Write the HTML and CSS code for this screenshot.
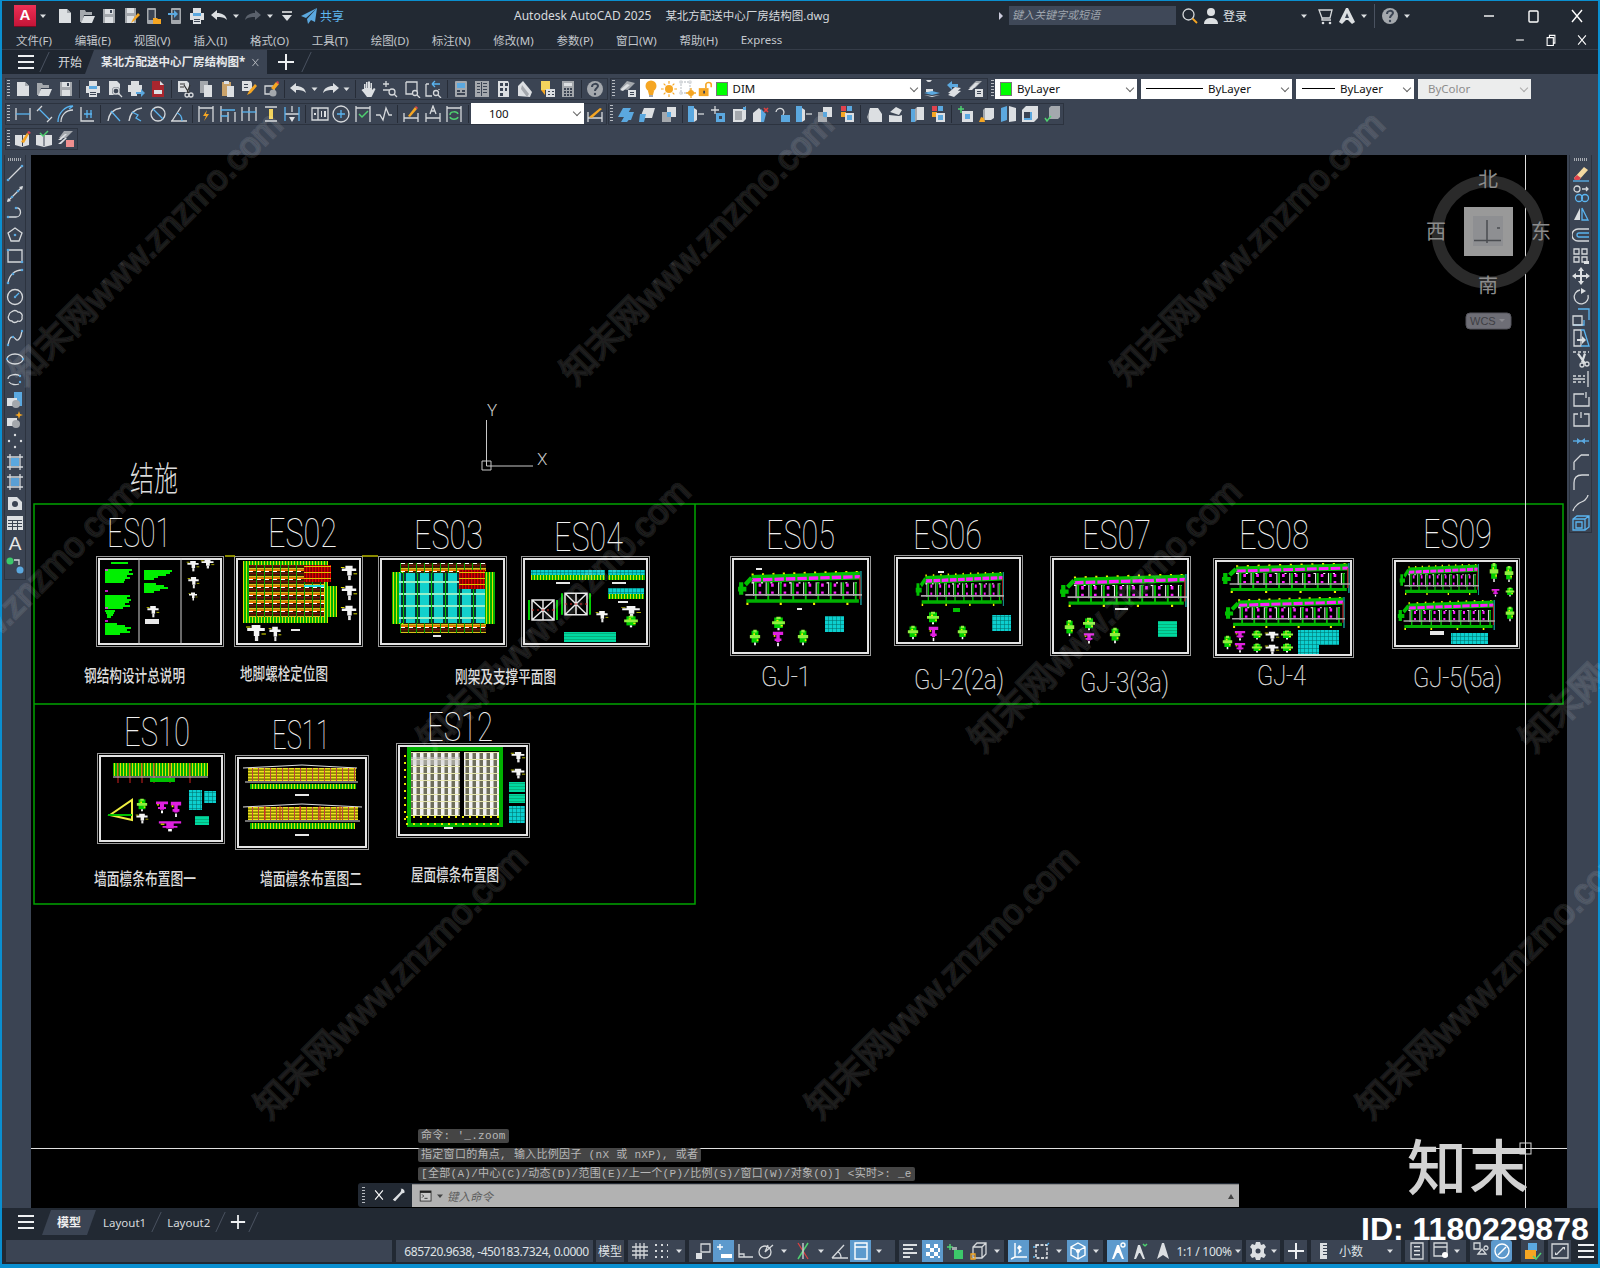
FILE: index.html
```html
<!DOCTYPE html>
<html lang="zh">
<head>
<meta charset="utf-8">
<title>Autodesk AutoCAD 2025</title>
<link rel="stylesheet" href="styles.css">
</head>
<body>
<svg class="defs" aria-hidden="true">
<defs>
<symbol id="doc" viewBox="0 0 18 18"><path class="F" d="M3 2h8l4 4v10H3z"/><path class="G" d="M11 2l4 4h-4z"/></symbol>
<symbol id="folder" viewBox="0 0 18 18"><path class="G" d="M2 3h5l1 2h6v3H6l-2 7H2z"/><path class="F" d="M6 9h11l-3 7H3z"/></symbol>
<symbol id="save" viewBox="0 0 18 18"><path class="G" d="M3 2h12v14H3z"/><path class="F" d="M5 2h8v5H5zM5 10h8v6H5z"/><path class="D" d="M10 3h2v3h-2z"/></symbol>
<symbol id="saveas" viewBox="0 0 18 18"><path class="G" d="M3 1h11v15H3z"/><path class="F" d="M5 1h7v5H5zM5 9h7v7H5z"/><path class="O" d="M9 16l2-4 5-6 2 2-6 6z"/></symbol>
<symbol id="phone" viewBox="0 0 18 18"><rect class="G" x="3" y="1" width="9" height="16" rx="1"/><rect class="D" x="4.500" y="3" width="6" height="10"/><path class="O" d="M9 11h4l1 1h3v5H9z"/></symbol>
<symbol id="phone2" viewBox="0 0 18 18"><rect class="G" x="5" y="1" width="10" height="16" rx="1"/><rect class="D" x="6.500" y="3" width="7" height="10"/><path class="B" d="M2 6h6V3l4 4-4 4V8H2z"/></symbol>
<symbol id="print" viewBox="0 0 18 18"><path class="F" d="M5 1h8v5H5z"/><path class="F" d="M2 6h14v7H2z"/><path class="F" d="M5 11h8v6H5z"/><path class="B" d="M5 6h8v3H5z"/><path class="D" d="M6 12h6v1H6zM6 14h6v1H6z"/></symbol>
<symbol id="preview" viewBox="0 0 18 18"><path class="F" d="M3 1h8l3 3v11H3z"/><circle class="D" cx="10" cy="11" r="4"/><circle class="l" cx="10" cy="11" r="3"/><path class="l" d="M12 13l4 4"/></symbol>
<symbol id="plotto" viewBox="0 0 18 18"><path class="F" d="M4 1h8v4H4zM1 5h14v7H1zM4 10h6v6H4z"/><path class="B" d="M9 12h5V9l4 4-4 4v-3H9z"/></symbol>
<symbol id="dwf" viewBox="0 0 18 18"><path class="Rd" d="M3 1h8l4 4v12H3z"/><path class="F" d="M11 1l4 4h-4zM5 10h8v4H5z"/></symbol>
<symbol id="cut" viewBox="0 0 18 18"><path class="F" d="M2 1h9l2 2v9H2z"/><circle class="l" cx="11" cy="15" r="2"/><circle class="l" cx="15" cy="15" r="2"/><path class="lk" d="M8 5l5 8M14 5l-3 8M4 4h5M4 7h4"/></symbol>
<symbol id="copy" viewBox="0 0 18 18"><path class="G" d="M3 1h8v12H3z"/><path class="F" d="M7 5h8v12H7z"/></symbol>
<symbol id="paste" viewBox="0 0 18 18"><path class="Br" d="M3 2h9v14H3z"/><path class="F" d="M5 1h5v3H5z"/><path class="F" d="M8 6h7v11H8z"/></symbol>
<symbol id="match" viewBox="0 0 18 18"><path class="F" d="M2 1h9l1 2v8H2z"/><path class="D" d="M4 4h4v1H4zM4 7h4v1H4z"/><path class="O" d="M7 15l2-4 6-7 2 2-6 7z"/></symbol>
<symbol id="block" viewBox="0 0 18 18"><path class="l" d="M3 6h8l1 2v6H3z"/><circle class="G" cx="11" cy="13" r="3.500"/><path class="O" d="M9 8l5-6 3 2-5 6z"/><path class="R" d="M14 2l2-1 1 2-1 1z"/></symbol>
<symbol id="undo" viewBox="0 0 18 18"><path class="F" d="M1 8l6-5v3c5 0 9 2 10 7-3-3-6-3-10-3v3z"/></symbol>
<symbol id="redo" viewBox="0 0 18 18"><path class="F" d="M17 8l-6-5v3C6 6 2 8 1 13c3-3 6-3 10-3v3z"/></symbol>
<symbol id="undog" viewBox="0 0 18 18"><path class="G2" d="M17 8l-6-5v3C6 6 2 8 1 13c3-3 6-3 10-3v3z"/></symbol>
<symbol id="hand" viewBox="0 0 18 18"><path class="F" d="M4 9V4h1.500v4h.5V2h1.500v6h.5V1.500H10V8h.5V3H12v7l2-2 1.500 1-3 6-1 2H7l-3-4-2.500-3L3 9z"/></symbol>
<symbol id="zrt" viewBox="0 0 18 18"><path class="l" d="M5 1v6M2 4h6M2 10h6"/><circle class="l" cx="11" cy="12" r="3"/><path class="l" d="M13 14l3 3"/></symbol>
<symbol id="zwin" viewBox="0 0 18 18"><path class="l" d="M3 2h11v9M3 2v12h6"/><circle class="l" cx="12" cy="13" r="2.500"/><path class="l" d="M14 15l3 3"/></symbol>
<symbol id="zprev" viewBox="0 0 18 18"><path class="b" d="M8 4h8M8 4l3-3M8 4l3 3"/><path class="l" d="M2 4v12h6M2 4h3M15 9v1"/><circle class="l" cx="12" cy="13" r="2.500"/><path class="l" d="M14 15l3 3"/></symbol>
<symbol id="props" viewBox="0 0 18 18"><rect class="G" x="3" y="1" width="12" height="16" rx="1"/><path class="B" d="M5 3h8v5H5z"/><path class="D" d="M5 10h3v2H5zM10 10h3v2h-3zM5 13h8v2H5z"/></symbol>
<symbol id="dc" viewBox="0 0 18 18"><rect class="G" x="2" y="1" width="14" height="16"/><path class="D" d="M8 2h1v14H8zM4 3h3v1H4zM4 6h3v1H4zM4 9h3v1H4zM4 12h3v1H4zM10 3h4v1h-4zM10 6h4v1h-4zM10 9h4v1h-4zM10 12h4v1h-4z"/></symbol>
<symbol id="tp" viewBox="0 0 18 18"><path class="F" d="M3 1h10l1 2v14H3z"/><path class="D" d="M5 3h3v3H5zM10 3h3v3h-3zM5 8h3v3H5zM10 8h2v3h-2zM5 13h3v3H5z"/></symbol>
<symbol id="sheet" viewBox="0 0 18 18"><path class="F" d="M2 16V6l5-5 9 11-2 5z"/><path class="G" d="M6 5l7 9-2 3-6-8z"/></symbol>
<symbol id="markup" viewBox="0 0 18 18"><path class="Y" d="M3 1h9v9H3z"/><path class="F" d="M8 9h9v8H8z"/><path class="D" d="M10 11h2v1h-2zM14 11h2v1h-2zM10 14h2v1h-2zM14 14h2v1h-2z"/><path class="O" d="M3 10h4v5z"/></symbol>
<symbol id="calc" viewBox="0 0 18 18"><rect class="G" x="3" y="1" width="12" height="16"/><path class="F" d="M5 3h8v3H5z"/><path class="D" d="M5 8h2v2H5zM8 8h2v2H8zM11 8h2v2h-2zM5 11h2v2H5zM8 11h2v2H8zM11 11h2v2h-2zM5 14h2v2H5zM8 14h2v2H8zM11 14h2v2h-2z"/></symbol>
<symbol id="help" viewBox="0 0 18 18"><circle class="G" cx="9" cy="9" r="8"/><path class="ln" d="M6 7c0-4 6-4 6-1 0 2-3 2-3 5"/><circle class="D" cx="9" cy="14" r="1.200"/></symbol>
<symbol id="lstack" viewBox="0 0 18 18"><path class="G" d="M8 1l8 2-7 7-8-1z"/><path class="F" d="M1 10l7-6 3 1-7 6z"/><path class="F" d="M9 10h8v7H9z"/><path class="D" d="M11 12h4v1h-4zM11 14h4v1h-4z"/></symbol>
<symbol id="bulb" viewBox="0 0 18 18"><circle class="O" cx="9" cy="6" r="5.500"/><path class="O" d="M6 11h6l-1 4H7z"/><path class="G" d="M7 15h4v2H7z"/></symbol>
<symbol id="sun" viewBox="0 0 18 18"><circle class="O" cx="9" cy="9" r="4.500"/><path class="lo" d="M9 0v3M9 15v3M0 9h3M15 9h3M3 3l2 2M13 13l2 2M3 15l2-2M13 5l2-2"/></symbol>
<symbol id="frz" viewBox="0 0 18 18"><path class="ld" d="M3 2h9v11H3z"/><circle class="l" cx="3" cy="2" r="1.200"/><circle class="l" cx="12" cy="2" r="1.200"/><circle class="l" cx="3" cy="13" r="1.200"/><circle class="O" cx="13" cy="13" r="3"/><path class="lo" d="M13 8v10M8 13h10"/></symbol>
<symbol id="lock" viewBox="0 0 18 18"><path class="O" d="M2 8h11v9H2z"/><path class="lo2" d="M10 8V4c0-3 6-3 6 0v3"/><path class="D" d="M7 11h2v3H7z"/></symbol>
<symbol id="lcur" viewBox="0 0 18 18"><path class="F" d="M6 2a3 3 0 1 1 .01 0zM3 9h7v3H3z"/><path class="B" d="M1 13l8-2 8 2-8 2z"/><path class="F" d="M1 15l8 2 8-2-8 1z"/></symbol>
<symbol id="lprev" viewBox="0 0 18 18"><path class="B" d="M2 5l5-4v3h6v3H7v3z"/><path class="F" d="M3 13l7-6 6 1-7 6zM3 15l7-5 6 1-7 6z"/></symbol>
<symbol id="lstate" viewBox="0 0 18 18"><path class="G" d="M3 8l7-7h6l-7 7z"/><path class="F" d="M2 10l7-7 4 0-7 7zM2 14l7-5"/><path class="F" d="M9 9h8v8H9z"/><path class="D" d="M11 11h4v1h-4zM11 13h4v1h-4z"/></symbol>
<symbol id="dlin" viewBox="0 0 18 18"><path class="l" d="M2 3v12M16 3v12"/><path class="b" d="M2 9h14"/></symbol>
<symbol id="dal" viewBox="0 0 18 18"><path class="l" d="M2 6l5-5M12 17l5-5"/><path class="b" d="M4 4l10 10"/></symbol>
<symbol id="darc" viewBox="0 0 18 18"><path class="l" d="M4 17c0-7 5-12 12-12"/><path class="b" d="M1 17C1 8 8 1 16 1M12 4l4-3"/></symbol>
<symbol id="dord" viewBox="0 0 18 18"><path class="l" d="M3 2v14h13"/><path class="b" d="M9 5v8M13 5v8M6 9h8"/></symbol>
<symbol id="drad" viewBox="0 0 18 18"><path class="l" d="M2 16C3 8 8 4 15 3"/><path class="b" d="M5 6l9 10"/></symbol>
<symbol id="djog" viewBox="0 0 18 18"><path class="l" d="M2 16C3 8 8 4 15 3"/><path class="b" d="M5 7l6 3-2 3 5 3"/></symbol>
<symbol id="ddia" viewBox="0 0 18 18"><circle class="l" cx="9" cy="9" r="7"/><path class="b" d="M4 4l10 10"/></symbol>
<symbol id="dang" viewBox="0 0 18 18"><path class="l" d="M1 16h16M2 16L11 2"/><path class="b" d="M7 8c3 1 5 4 5 8"/></symbol>
<symbol id="dq" viewBox="0 0 18 18"><path class="l" d="M2 1v16M16 1v16M2 3h14"/><path class="O" d="M10 5l-4 6h3l-2 5 5-7H9z"/></symbol>
<symbol id="dbase" viewBox="0 0 18 18"><path class="l" d="M2 1v16M9 7v10M16 7v10"/><path class="b" d="M2 5h14M2 11h7"/></symbol>
<symbol id="dcont" viewBox="0 0 18 18"><path class="l" d="M2 2v14M9 2v14M16 2v14"/><path class="b" d="M2 7h14"/></symbol>
<symbol id="dsp" viewBox="0 0 18 18"><path class="l" d="M3 2h12M3 16h12"/><path class="Y" d="M7 4h4v10H7z"/></symbol>
<symbol id="dbrk" viewBox="0 0 18 18"><path class="l" d="M2 9h14M9 1v6"/><path class="F" d="M6 12h6l-3 5z"/><path class="b" d="M2 2v14M16 2v14"/></symbol>
<symbol id="tol" viewBox="0 0 18 18"><path class="l" d="M1 3h16v12H1zM7 3v12"/><path class="F" d="M3 8h2v2H3zM10 6h1v6h-1zM13 6h2v6h-2z"/></symbol>
<symbol id="cen" viewBox="0 0 18 18"><circle class="l" cx="9" cy="9" r="8"/><path class="b" d="M9 5v8M5 9h8"/></symbol>
<symbol id="insp" viewBox="0 0 18 18"><path class="l" d="M2 1v16M16 1v16M2 3h14"/><path class="gc" d="M5 9l3 3 6-6"/></symbol>
<symbol id="jog" viewBox="0 0 18 18"><path class="l" d="M1 10h4l3 5 3-12 3 7h3"/></symbol>
<symbol id="dedit" viewBox="0 0 18 18"><path class="l" d="M2 8v9M16 8v9M2 13h14"/><path class="O" d="M6 11l7-9 2 2-7 8z"/><path class="R" d="M13 2l1-1 2 2-1 1z"/></symbol>
<symbol id="dtxt" viewBox="0 0 18 18"><path class="l" d="M2 8v9M16 8v9M2 13h14M6 9l3-8 3 8M7 6h4"/></symbol>
<symbol id="dup" viewBox="0 0 18 18"><path class="l" d="M2 1v16M16 1v16M2 3h14"/><path class="gc" d="M5 10c0-4 7-4 8-1M13 12c-1 3-7 3-8 0"/></symbol>
<symbol id="dst" viewBox="0 0 18 18"><path class="l" d="M2 7v10M16 7v10M2 13h14"/><path class="O" d="M3 12l11-9 2 1-10 9z"/></symbol>
<symbol id="box1" viewBox="0 0 18 18"><path class="B" d="M1 12l5-9h8l-5 9zM6 15l4-8h7l-3 8z"/><path class="B" d="M4 17l3-5h7l-4 5z"/></symbol>
<symbol id="box2" viewBox="0 0 18 18"><path class="F" d="M6 3h11l-3 10H2z"/><path class="B" d="M2 9h6l-2 8H1z"/></symbol>
<symbol id="box3" viewBox="0 0 18 18"><path class="F" d="M7 2h9v10H7z"/><path class="G" d="M2 7h9v10H2z"/><path class="B" d="M7 7h4v5H7z"/></symbol>
<symbol id="ext" viewBox="0 0 18 18"><path class="B" d="M1 1h6v16H1z"/><path class="F" d="M7 3l3 2v10l-3 2z"/><path class="l" d="M11 9h6"/></symbol>
<symbol id="mv3" viewBox="0 0 18 18"><path class="l" d="M6 1v8M2 5h8"/><path class="B" d="M7 8h9v9H7z"/><path class="D" d="M10 11h3v3h-3z"/></symbol>
<symbol id="boxs" viewBox="0 0 18 18"><path class="F" d="M3 4h10l3-3v13l-3 3H3z"/><path class="G" d="M5 6h7v9H5z"/><path class="B" d="M13 2h3v3h-3z"/></symbol>
<symbol id="rbox" viewBox="0 0 18 18"><path class="F" d="M1 17V8l6-5 3 3-1 11z"/><path class="B" d="M9 4l5 5-2 8H9z"/><path class="lr2" d="M12 3l4 4M16 3l-4 4"/></symbol>
<symbol id="rot3" viewBox="0 0 18 18"><path class="l" d="M3 7a4 4 0 1 1 7 3"/><path class="B" d="M8 10h9v7H8z"/></symbol>
<symbol id="wedge" viewBox="0 0 18 18"><path class="F" d="M5 3h8l4 6v8H4V6z"/><path class="G" d="M4 7l-2 5 2 5z"/></symbol>
<symbol id="drum" viewBox="0 0 18 18"><path class="F" d="M4 7l6-5 6 3-3 5zM3 10l10 1 3-1v7H3z"/></symbol>
<symbol id="sl3" viewBox="0 0 18 18"><path class="B" d="M3 4h4v13H3z"/><path class="F" d="M9 2h7v13H9z"/><path class="G" d="M7 4l2-2v13l-2 2z"/></symbol>
<symbol id="color3" viewBox="0 0 18 18"><path class="R" d="M3 1h5v5H3z"/><path class="B" d="M9 1h5v5H9z"/><path class="O" d="M3 7h5v5H3z"/><path class="F" d="M7 8h9v9H7z"/><path class="B" d="M9 10h5v5H9z"/></symbol>
<symbol id="addbox" viewBox="0 0 18 18"><path class="gc" d="M4 1v7M1 4h6"/><path class="F" d="M5 6h11v11H5z"/><path class="B" d="M8 9h5v5H8z"/></symbol>
<symbol id="sweep" viewBox="0 0 18 18"><path class="F" d="M7 3h9v10l-3 2H7z"/><path class="G" d="M5 5l2-2v12l-2 1z"/><path class="O" d="M3 12l3 1 1 4H1z"/></symbol>
<symbol id="split3" viewBox="0 0 18 18"><path class="B" d="M1 3l6-2v14l-6 2z"/><path class="F" d="M9 1l7 2v13l-7 1z"/></symbol>
<symbol id="cube" viewBox="0 0 18 18"><path class="F" d="M1 5l4-4h12v12l-4 4H1z"/><path class="B" d="M3 7h8v8H3z"/><path class="D" d="M3 7h6v6H3z"/></symbol>
<symbol id="chk3" viewBox="0 0 18 18"><path class="G" d="M6 3l2-2h9v11l-2 2H6z"/><path class="gc" d="M2 13l2 3 4-5"/></symbol>
<symbol id="erase" viewBox="0 0 18 18"><path class="Fr" d="M2 14l10-11 4 3-9 10H3z"/><path class="R" d="M2 14l3-3 4 3-2 2H3z"/><path class="b" d="M1 17h16"/></symbol>
<symbol id="copyc" viewBox="0 0 18 18"><circle class="l" cx="5" cy="4" r="3"/><circle class="b" cx="7" cy="13" r="3.500"/><circle class="b" cx="13" cy="13" r="3.500"/><path class="l" d="M10 4h6M14 2l2 2-2 2"/></symbol>
<symbol id="mirror" viewBox="0 0 18 18"><path class="F" d="M8 3v12H2z"/><path class="b" d="M10 3l6 12h-6z"/></symbol>
<symbol id="offs" viewBox="0 0 18 18"><path class="l" d="M17 3H6a6 6 0 0 0 0 12h11"/><path class="b" d="M17 7H7a2 2 0 0 0 0 4h10"/></symbol>
<symbol id="arr" viewBox="0 0 18 18"><path class="l" d="M2 2h5v5H2zM10 2h5v5h-5zM2 10h5v5H2zM10 10h5v5h-5z"/><path class="F" d="M12 14h5v3h-5z"/></symbol>
<symbol id="mv" viewBox="0 0 18 18"><path class="F" d="M9 0l3 4h-2v4h4V6l4 3-4 3v-2h-4v4h2l-3 4-3-4h2v-4H4v2L0 9l4-3v2h4V4H6z"/></symbol>
<symbol id="rot" viewBox="0 0 18 18"><path class="l" d="M8 2a7 7 0 1 0 8 5"/><path class="F" d="M9 0l5 3-5 3z"/></symbol>
<symbol id="scale" viewBox="0 0 18 18"><path class="b" d="M6 1h11v11M1 17h11v-5"/><path class="l" d="M1 8h9v9H1z"/></symbol>
<symbol id="stretch" viewBox="0 0 18 18"><path class="l" d="M2 1h7v16H2z"/><path class="b" d="M9 1h3l5 16H9"/><path class="F" d="M5 10h5V7l4 4-4 4v-3H5z"/></symbol>
<symbol id="trim" viewBox="0 0 18 18"><path class="ldash" d="M1 2h16"/><circle class="l" cx="10" cy="15" r="2"/><circle class="l" cx="15" cy="14" r="2"/><path class="F" d="M5 4l2-1 7 10-2 1zM12 3l2 1-3 9-2-1z"/></symbol>
<symbol id="ext2" viewBox="0 0 18 18"><path class="l" d="M16 1v16M1 9h12"/><path class="ldash" d="M1 6h12M1 12h12"/></symbol>
<symbol id="brk" viewBox="0 0 18 18"><path class="l" d="M12 3H2v12h15V6M14 1v6"/></symbol>
<symbol id="brk2" viewBox="0 0 18 18"><path class="l" d="M6 3H2v12h15V3h-5M9 1v6"/></symbol>
<symbol id="join" viewBox="0 0 18 18"><path class="b" d="M1 9h16"/><path class="B" d="M5 6l4 3-4 3zM13 6L9 9l4 3z"/></symbol>
<symbol id="cham" viewBox="0 0 18 18"><path class="l" d="M9 2h8M2 9v8M2 9l7-7"/></symbol>
<symbol id="fil" viewBox="0 0 18 18"><path class="l" d="M10 2h7M2 10v7M2 10c0-5 3-8 8-8"/></symbol>
<symbol id="blend" viewBox="0 0 18 18"><path class="l" d="M1 17c1-4 3-5 5-7s5-2 7-4 3-3 3-5"/></symbol>
<symbol id="solid" viewBox="0 0 18 18"><path class="b" d="M1 5l4-3h12v11l-4 3H1zM1 5h12v11M13 5l4-3M4 8h6v6H4z"/></symbol>
<symbol id="line" viewBox="0 0 18 18"><path class="l" d="M2 16L16 2"/><circle class="B" cx="2" cy="16" r="1.300"/><circle class="B" cx="16" cy="2" r="1.300"/></symbol>
<symbol id="xline" viewBox="0 0 18 18"><path class="F" d="M1 17l4-1-3-3zM17 1l-4 1 3 3z"/><path class="l" d="M2 16L16 2"/><circle class="B" cx="6" cy="12" r="1.300"/><circle class="B" cx="12" cy="6" r="1.300"/></symbol>
<symbol id="pline" viewBox="0 0 18 18"><path class="l" d="M2 12h8M10 3c6-1 6 9 0 9"/><circle class="B" cx="2" cy="12" r="1.300"/><circle class="B" cx="10" cy="3" r="1.300"/></symbol>
<symbol id="poly" viewBox="0 0 18 18"><path class="l" d="M9 2l7 5-3 8H5L2 7z"/><circle class="B" cx="9" cy="9" r="1.300"/></symbol>
<symbol id="rect" viewBox="0 0 18 18"><path class="l" d="M2 3h14v12H2z"/><circle class="B" cx="2" cy="3" r="1.300"/><circle class="B" cx="16" cy="15" r="1.300"/></symbol>
<symbol id="arc" viewBox="0 0 18 18"><path class="l" d="M2 16C3 8 9 3 16 3"/><circle class="B" cx="2" cy="16" r="1.300"/><circle class="B" cx="7" cy="7" r="1.300"/><circle class="B" cx="16" cy="3" r="1.300"/></symbol>
<symbol id="circle" viewBox="0 0 18 18"><circle class="l" cx="9" cy="9" r="7.500"/><path class="b" d="M9 9l4-4"/><circle class="B" cx="9" cy="9" r="1.200"/></symbol>
<symbol id="cloud" viewBox="0 0 18 18"><path class="l" d="M3 7c0-3 3-3 4-4 2-1 4 0 5 1 3 0 5 3 4 5 1 3-2 5-4 4-2 2-5 2-6 0-3 0-5-3-3-6z"/></symbol>
<symbol id="spl" viewBox="0 0 18 18"><path class="l" d="M2 16c1-4 2-9 5-8s3 5 6 2 2-6 3-8"/><circle class="B" cx="2" cy="16" r="1.200"/><circle class="B" cx="7" cy="8" r="1.200"/><circle class="B" cx="16" cy="2" r="1.200"/></symbol>
<symbol id="ell" viewBox="0 0 18 18"><ellipse class="l" cx="9" cy="9" rx="8" ry="5"/><circle class="B" cx="1" cy="9" r="1.200"/><circle class="B" cx="17" cy="9" r="1.200"/></symbol>
<symbol id="ela" viewBox="0 0 18 18"><path class="l" d="M2 9c0-4 8-6 12-3M3 12c2 3 7 3 10 2"/><circle class="B" cx="14" cy="6" r="1.200"/><circle class="B" cx="14" cy="12" r="1.200"/></symbol>
<symbol id="insb" viewBox="0 0 18 18"><path class="B" d="M8 1h8v14H8z"/><path class="F" d="M1 7h10v8H1z"/><circle class="G" cx="10" cy="13" r="4"/></symbol>
<symbol id="mkb" viewBox="0 0 18 18"><path class="F" d="M1 7h10v8H1z"/><circle class="G" cx="10" cy="13" r="4"/><path class="O" d="M13 0l1 3 3 1-3 1-1 3-1-3-3-1 3-1z"/></symbol>
<symbol id="pts" viewBox="0 0 18 18"><circle class="F" cx="9" cy="3" r="1.200"/><circle class="F" cx="3" cy="9" r="1.200"/><circle class="F" cx="15" cy="9" r="1.200"/><circle class="F" cx="9" cy="15" r="1.200"/></symbol>
<symbol id="hat" viewBox="0 0 18 18"><path class="l" d="M1 4h16M1 14h16M4 1v16M14 1v16"/><path class="B" d="M5 5h8v8H5z"/></symbol>
<symbol id="grad" viewBox="0 0 18 18"><path class="l" d="M1 4h16M1 14h16M4 1v16M14 1v16"/><path class="Gd" d="M5 5h8v8H5z"/></symbol>
<symbol id="reg" viewBox="0 0 18 18"><path class="F" d="M2 3h9l5 5v8H2z"/><circle class="D" cx="9" cy="10" r="3"/></symbol>
<symbol id="tbl" viewBox="0 0 18 18"><path class="F" d="M1 2h16v14H1z"/><path class="D" d="M2 6h14v1H2zM2 9h14v1H2zM2 12h14v1H2zM6 6h1v10H6zM11 6h1v10h-1z"/></symbol>
<symbol id="gradc" viewBox="0 0 18 18"><circle class="N" cx="4" cy="5" r="3.500"/><circle class="B" cx="14" cy="14" r="3.500"/><path class="l" d="M8 4h5v5"/></symbol>
<symbol id="e1" viewBox="0 0 18 18"><path class="F" d="M1 5h14v10l-7 2-7-2z"/><path class="D" d="M8 5h1v11H8z"/><path class="O" d="M7 12l6-9 2 1-5 9z"/><path class="R" d="M13 2l2-1 2 2-2 1z"/></symbol>
<symbol id="e2" viewBox="0 0 18 18"><path class="F" d="M1 5h16v10l-8 2-8-2z"/><path class="D" d="M8.500 5h1v11h-1z"/><path class="gc" d="M5 3l3 3 5-5"/></symbol>
<symbol id="e3" viewBox="0 0 18 18"><path class="G" d="M7 1h9L9 8H2z"/><path class="F" d="M1 10l7-6 2 0-6 6zM1 14l7-6 2 0-6 6z"/><path class="Rp" d="M9 10h8v7H9z"/></symbol>
<symbol id="grid" viewBox="0 0 18 18"><path class="l" d="M1 5h16M1 9h16M1 13h16M5 1v16M9 1v16M13 1v16"/></symbol>
<symbol id="snap" viewBox="0 0 18 18"><path class="ldot" d="M3 3h13M3 9h13M3 15h13"/></symbol>
<symbol id="infer" viewBox="0 0 18 18"><path class="l" d="M7 2h9v8H7z"/><path class="F" d="M2 11h6v6H2z"/></symbol>
<symbol id="dynin" viewBox="0 0 18 18"><path class="lw" d="M5 2v6M2 5h6"/><path class="Fw" d="M6 12h11v4H6z"/></symbol>
<symbol id="ortho" viewBox="0 0 18 18"><path class="l" d="M3 2v13h14M3 12h5v3"/></symbol>
<symbol id="polar" viewBox="0 0 18 18"><circle class="l" cx="8" cy="10" r="6"/><path class="l" d="M8 10l8-7M8 10l3-7"/></symbol>
<symbol id="xsnap" viewBox="0 0 18 18"><path class="lr" d="M4 1l10 16"/><path class="gc" d="M14 1L4 17"/><path class="l" d="M9 1v16"/></symbol>
<symbol id="angle" viewBox="0 0 18 18"><path class="l" d="M1 16h16M1 16L13 3"/><path class="l" d="M7 10c2 1 3 4 3 6"/></symbol>
<symbol id="osnap" viewBox="0 0 18 18"><path class="lw" d="M3 1h12v16H3zM3 5h12"/></symbol>
<symbol id="lwt" viewBox="0 0 18 18"><path class="F" d="M2 2h14v2H2zM2 6h10v2H2zM2 10h14v2H2zM2 14h7v2H2z"/></symbol>
<symbol id="transp" viewBox="0 0 18 18"><path class="Fw" d="M2 2h4v4H2zM10 2h4v4h-4zM6 6h4v4H6zM14 6h2v4h-2zM2 10h4v4H2zM10 10h4v4h-4zM6 14h4v2H6zM14 14h2v2h-2z"/></symbol>
<symbol id="selc" viewBox="0 0 18 18"><path class="gc" d="M3 2v6M0 5h6"/><path class="G" d="M5 5h5v3H5z"/><path class="N" d="M7 8h9v9H7z"/></symbol>
<symbol id="d3" viewBox="0 0 18 18"><path class="l" d="M7 1h9v11l-4 4H3V5zM3 5h9v11M12 5l4-4"/><path class="lo" d="M1 12h4v5H1z"/></symbol>
<symbol id="axes" viewBox="0 0 18 18"><path class="lw" d="M5 1v14h12M5 15l-4 2"/><path class="Fw" d="M9 3l3 2-2 2 2 2-4 3 1-4-2-2z"/></symbol>
<symbol id="gz" viewBox="0 0 18 18"><path class="ldb" d="M4 3h11v13H4z"/><path class="b" d="M1 5h2M15 3l2-2M1 15h2"/></symbol>
<symbol id="ucs3" viewBox="0 0 18 18"><path class="lw" d="M9 1l7 4v8l-7 4-7-4V5zM2 5l7 4 7-4M9 9v8"/><circle class="Fw" cx="9" cy="9" r="2"/></symbol>
<symbol id="anno" viewBox="0 0 18 18"><path class="Fw" d="M8 3l2 0 5 14-2 0-3-6-2 0-3 6H3z"/><circle class="lw" cx="14" cy="3" r="2"/></symbol>
<symbol id="anno2" viewBox="0 0 18 18"><path class="F" d="M7 3h2l5 14h-2l-3-6H8l-3 6H3z"/><path class="gc" d="M12 2l2 2M16 2l-2 2"/></symbol>
<symbol id="anno3" viewBox="0 0 18 18"><path class="F" d="M8 1h2l5 16-6-4-6 4z"/></symbol>
<symbol id="gear" viewBox="0 0 18 18"><path class="F" d="M7 0h4l1 3 3-1 2 3-2 2v4l2 2-2 3-3-1-1 3H7l-1-3-3 1-2-3 2-2V7L1 5l2-3 3 1z"/><circle class="D" cx="9" cy="9" r="2.500"/></symbol>
<symbol id="plus" viewBox="0 0 18 18"><path class="lb" d="M9 1v16M1 9h16"/></symbol>
<symbol id="ruler" viewBox="0 0 18 18"><path class="F" d="M5 1h7v16H5z"/><path class="D" d="M8 3h4v1H8zM8 6h4v1H8zM8 9h4v1H8zM8 12h4v1H8z"/></symbol>
<symbol id="clip" viewBox="0 0 18 18"><path class="l" d="M3 1h12v16H3z"/><path class="F" d="M6 4h6v1.500H6zM6 8h6v1.500H6zM6 12h6v1.500H6z"/></symbol>
<symbol id="ws" viewBox="0 0 18 18"><path class="l" d="M2 1h13v13H2zM2 5h13"/><circle class="Fw" cx="13" cy="13" r="3"/></symbol>
<symbol id="iso" viewBox="0 0 18 18"><path class="l" d="M1 1h6v6H1zM5 12l4-5 4 5zM13 4a2 2 0 1 0 .01 0z"/></symbol>
<symbol id="gauge" viewBox="0 0 18 18"><circle class="lw" cx="9" cy="9" r="7"/><path class="lw" d="M5 13l8-8"/></symbol>
<symbol id="hw" viewBox="0 0 18 18"><path class="B" d="M4 1h9v8H4z"/><path class="O" d="M1 8h11v9H1z"/><path class="gc" d="M9 14l3 3 5-6"/></symbol>
<symbol id="full" viewBox="0 0 18 18"><path class="l" d="M1 2h16v14H1z"/><path class="F" d="M11 5h3v3zM7 13H4v-3z"/><path class="l" d="M6 12l6-6"/></symbol>
<symbol id="menu" viewBox="0 0 18 18"><path class="lb" d="M1 3h16M1 9h16M1 15h16"/></symbol>
<symbol id="chev" viewBox="0 0 8 8"><path class="F" d="M1 2.500h6L4 6z"/></symbol>
<symbol id="search" viewBox="0 0 18 18"><circle class="l" cx="7.500" cy="7.500" r="5.500"/><path class="lo2" d="M11.500 11.500L16 16"/></symbol>
<symbol id="user" viewBox="0 0 18 18"><circle class="F" cx="9" cy="5" r="4"/><path class="F" d="M2 17c0-5 4-6 7-6s7 1 7 6z"/></symbol>
<symbol id="cart" viewBox="0 0 18 18"><path class="l" d="M2 3h13l-2 8H5zM5 11v2h9"/><circle class="F" cx="6" cy="16" r="1.300"/><circle class="F" cx="13" cy="16" r="1.300"/></symbol>
<symbol id="aut" viewBox="0 0 18 18"><path class="F" d="M8 1h2l7 14-3 2-4-4H8l-4 4-3-2z"/><path class="D" d="M9 6l2 5H7z"/></symbol>
<symbol id="plane" viewBox="0 0 18 18"><path class="B" d="M17 1L1 9l5 2zM17 1L7 12l1 5 3-4 4 2z"/></symbol>
<symbol id="qdrop" viewBox="0 0 18 18"><path class="lw" d="M4 5h10"/><path class="F" d="M4 8h10l-5 6z"/></symbol>
<symbol id="min" viewBox="0 0 18 18"><path class="lw" d="M4 9h10"/></symbol>
<symbol id="max" viewBox="0 0 18 18"><rect class="lw" x="5" y="4" width="9" height="11" rx="1"/></symbol>
<symbol id="close" viewBox="0 0 18 18"><path class="lw" d="M4 3l10 12M14 3L4 15"/></symbol>
<symbol id="restore" viewBox="0 0 18 18"><path class="lw" d="M4 6h8v10H4zM7 6V3h7v10h-2"/></symbol>
<symbol id="wrench" viewBox="0 0 18 18"><path class="F" d="M11 1c3-1 6 2 5 5l-3 1-2-2 1-3zM11 5l2 2-9 10-3-2z"/></symbol>
<symbol id="term" viewBox="0 0 18 18"><path class="Dk" d="M1 2h15v14H1z"/><path class="Lt" d="M2 5h13v10H2z"/><path class="lk" d="M4 7l2 2-2 2M7 12h4"/></symbol>
<pattern id="pStripe" width="8" height="8" patternUnits="userSpaceOnUse"><rect width="8" height="8" fill="#3a1d00"/><rect width="8" height="1.500" fill="#d8c21a"/><rect y="1.500" width="8" height="1.500" fill="#ff7b00"/><rect y="3" width="5" height="1" fill="#ffffff"/><rect y="5" width="8" height="1" fill="#7a0d0d"/><rect x="0" width="1" height="8" fill="#00a000"/></pattern>
<pattern id="pRed" width="3" height="6" patternUnits="userSpaceOnUse"><rect width="3" height="6" fill="#7d0000"/><rect width="1.300" height="6" fill="#e00000"/><rect y="2" width="3" height="1" fill="#e0c800"/></pattern>
<pattern id="pCyan" width="14" height="12" patternUnits="userSpaceOnUse"><rect width="14" height="12" fill="#04363a"/><rect width="9" height="12" fill="#12d0cc"/><rect y="5" width="14" height="2" fill="#98f0c8"/><rect x="11" width="1" height="12" fill="#00c000"/></pattern>
<pattern id="pGreen" width="3" height="5" patternUnits="userSpaceOnUse"><rect width="3" height="5" fill="#00b000"/><rect width="1" height="5" fill="#e0e000"/></pattern>
<pattern id="pTable" width="4" height="4" patternUnits="userSpaceOnUse"><rect width="4" height="4" fill="#0ccfcf"/><path d="M0 0h4M0 0v4" stroke="#006a64" stroke-width="1"/></pattern>
<pattern id="pTableG" width="3" height="3" patternUnits="userSpaceOnUse"><rect width="3" height="3" fill="#00d8a0"/><path d="M0 0h3" stroke="#0a8a5a" stroke-width="1"/></pattern>
<pattern id="pWhite" width="7" height="7" patternUnits="userSpaceOnUse"><rect width="7" height="7" fill="#6f6f5a"/><rect width="3.500" height="7" fill="#f2f2f2"/><rect y="3" width="7" height="1" fill="#e8e8b0"/></pattern>
<pattern id="pYellow" width="6" height="3" patternUnits="userSpaceOnUse"><rect width="6" height="3" fill="#8a8a00"/><rect width="6" height="1.300" fill="#f0e020"/><rect width="1" height="3" fill="#c04040"/></pattern>
<symbol id="truss" viewBox="0 0 120 30" preserveAspectRatio="none">
<path stroke="#00c000" stroke-width="7" fill="none" d="M14 7l104-3"/>
<path stroke="#ff20ff" stroke-width="3" stroke-dasharray="9 2" fill="none" d="M14 8l104-3"/>
<path stroke="#f0f000" stroke-width="1.500" stroke-dasharray="2 8" fill="none" d="M14 3l104-3"/>
<path stroke="#ffffff" stroke-dasharray="2 7" fill="none" d="M14 10.500h104"/>
<path stroke="#00c000" stroke-width="1.800" fill="none" d="M18 10v17M30 10v17M42 10v17M54 10v17M66 10v17M78 10v17M90 10v17M102 10v17M114 10v17"/>
<path stroke="#f0f0f0" fill="none" d="M16 10v12M28 10v12M40 10v12M52 10v12M64 10v12M76 10v12M88 10v12M100 10v12M112 10v12"/>
<path stroke="#ff20ff" stroke-width="2.500" stroke-dasharray="3 4" fill="none" d="M22 11v9M34 11v9M46 11v9M58 11v9M70 11v9M82 11v9M94 11v9M106 11v9"/>
<path stroke="#20d8d8" fill="none" d="M119 0v30"/>
<path stroke="#e02020" fill="none" d="M118 5v20"/>
<path stroke="#a8a8a8" stroke-width="1.500" fill="none" d="M8 21h112"/>
<path stroke="#00b000" stroke-width="3" fill="none" d="M9 26.500h108"/>
<path stroke="#00c000" stroke-width="4" fill="none" d="M4 10v11M1 16h8M8 12l6-6"/>
<path stroke="#f0f000" stroke-width="2" stroke-dasharray="2 30" fill="none" d="M9 29h112"/>
</symbol>
<symbol id="det" viewBox="0 0 14 20" preserveAspectRatio="none"><path fill="#00d000" d="M3 2h8v14H3z"/><path fill="#90f040" d="M5 1h4v3H5zM1 7h12v4H1z"/><path fill="#f0f000" d="M5 5h2v2H5zM9 12h2v2H9z"/><path fill="#ffffff" d="M6 16h2v3H6z"/></symbol>
<symbol id="detm" viewBox="0 0 14 20" preserveAspectRatio="none"><path fill="#e020e0" d="M1 2h12v4H1zM5 6h4v8H5zM3 10h8v3H3z"/><path fill="#f0f000" d="M2 6h2v2H2z"/><path fill="#ffffff" d="M6 15h2v4H6z"/></symbol>
<symbol id="wd" viewBox="0 0 20 20" preserveAspectRatio="none"><path fill="#f4f4f4" d="M6 3h8v3h4v3h-5v5H8V9H2V6h4z"/><path fill="#e8e8e8" d="M9 14h3v5H9z"/><path stroke="#f0f000" fill="none" d="M1 5h4M15 12h4"/></symbol>
<symbol id="xfr" viewBox="0 0 30 26" preserveAspectRatio="none"><path stroke="#e8e8e8" stroke-width="1.500" fill="none" d="M4 3h22v20H4zM4 3l22 20M26 3L4 23M15 3v20"/><path stroke="#00d000" stroke-width="2" fill="none" d="M1 3v20M29 3v20"/><path stroke="#e02020" stroke-dasharray="2 3" fill="none" d="M4 13h22"/></symbol>
</defs>
</svg>

<div class="page">
<div class="win">
  <header class="titlebar">
    <div class="logo">A</div>
    <svg class="cv ml2"><use href="#chev"/></svg>
    <div class="qa">
      <svg class="i"><use href="#doc"/></svg><svg class="i"><use href="#folder"/></svg><svg class="i"><use href="#save"/></svg><svg class="i"><use href="#saveas"/></svg><svg class="i"><use href="#phone"/></svg><svg class="i"><use href="#phone2"/></svg><svg class="i"><use href="#print"/></svg><svg class="i"><use href="#undo"/></svg><svg class="cv"><use href="#chev"/></svg><svg class="i dim"><use href="#undog"/></svg><svg class="cv"><use href="#chev"/></svg><svg class="i q"><use href="#qdrop"/></svg>
      <svg class="i"><use href="#plane"/></svg><span class="share">共享</span>
    </div>
    <div class="apptitle"><span>Autodesk AutoCAD 2025</span><span class="fname">某北方配送中心厂房结构图.dwg</span></div>
    <div class="tbright">
      <span class="tri"></span>
      <div class="searchbox">键入关键字或短语</div>
      <svg class="i"><use href="#search"/></svg><svg class="i"><use href="#user"/></svg><span class="login">登录</span>
      <svg class="cv ml-login"><use href="#chev"/></svg><svg class="i"><use href="#cart"/></svg><svg class="i"><use href="#aut"/></svg><svg class="cv"><use href="#chev"/></svg><span class="tsep"></span><svg class="i"><use href="#help"/></svg><svg class="cv"><use href="#chev"/></svg>
      <svg class="i wbtn first"><use href="#min"/></svg><svg class="i wbtn"><use href="#max"/></svg><svg class="i wbtn"><use href="#close"/></svg>
    </div>
  </header>

  <nav class="menubar">
    <span>文件(F)</span><span>编辑(E)</span><span>视图(V)</span><span>插入(I)</span><span>格式(O)</span><span>工具(T)</span><span>绘图(D)</span><span>标注(N)</span><span>修改(M)</span><span>参数(P)</span><span>窗口(W)</span><span>帮助(H)</span><span>Express</span>
    <div class="mwin"><svg class="i"><use href="#min"/></svg><svg class="i"><use href="#restore"/></svg><svg class="i"><use href="#close"/></svg></div>
  </nav>

  <div class="tabbar">
    <svg class="i menuic"><use href="#menu"/></svg>
    <span class="slash s1"></span>
    <span class="tab">开始</span>
    <span class="tab active">某北方配送中心厂房结构图* <svg class="tabx"><use href="#close"/></svg></span>
    <svg class="i plusic"><use href="#plus"/></svg>
    <span class="slash"></span>
  </div>

  <div class="tools">
    <div class="row r1">
      <div class="grp g1">
        <span class="grip"></span>
        <svg class="i"><use href="#doc"/></svg><svg class="i"><use href="#folder"/></svg><svg class="i"><use href="#save"/></svg><span class="sp"></span>
        <svg class="i"><use href="#print"/></svg><svg class="i"><use href="#preview"/></svg><svg class="i"><use href="#plotto"/></svg><svg class="i"><use href="#dwf"/></svg><span class="sp"></span>
        <svg class="i"><use href="#cut"/></svg><svg class="i"><use href="#copy"/></svg><svg class="i"><use href="#paste"/></svg><svg class="i"><use href="#match"/></svg><svg class="i"><use href="#block"/></svg><span class="sp"></span>
        <svg class="i"><use href="#undo"/></svg><svg class="cv cw"><use href="#chev"/></svg><svg class="i"><use href="#redo"/></svg><svg class="cv cw"><use href="#chev"/></svg><span class="sp"></span>
        <svg class="i"><use href="#hand"/></svg><svg class="i"><use href="#zrt"/></svg><svg class="i"><use href="#zwin"/></svg><svg class="i"><use href="#zprev"/></svg><span class="sp"></span>
        <svg class="i"><use href="#props"/></svg><svg class="i"><use href="#dc"/></svg><svg class="i"><use href="#tp"/></svg><svg class="i"><use href="#sheet"/></svg><svg class="i"><use href="#markup"/></svg><svg class="i"><use href="#calc"/></svg><span class="sp"></span>
        <svg class="i"><use href="#help"/></svg>
      </div>
      <div class="grp g2">
        <span class="grip"></span>
        <svg class="i"><use href="#lstack"/></svg>
        <div class="combo layer">
          <svg class="i"><use href="#bulb"/></svg><svg class="i sm"><use href="#sun"/></svg><svg class="i"><use href="#frz"/></svg><svg class="i sm"><use href="#lock"/></svg><span class="swatch"></span><span class="ctext">DIM</span><span class="vee"></span>
        </div>
        <svg class="i"><use href="#lcur"/></svg><svg class="i"><use href="#lprev"/></svg><svg class="i"><use href="#lstate"/></svg>
      </div>
      <span class="grip alone"></span>
      <div class="combo c-color"><span class="swatch"></span><span class="ctext">ByLayer</span><span class="vee"></span></div>
      <div class="combo c-lt"><span class="ln1"></span><span class="ctext">ByLayer</span><span class="vee"></span></div>
      <div class="combo c-lw"><span class="ln2"></span><span class="ctext">ByLayer</span><span class="vee"></span></div>
      <div class="combo c-by"><span class="ctext off">ByColor</span><span class="vee off"></span></div>
    </div>
    <div class="row r2">
      <div class="grp g3">
        <span class="grip"></span>
        <svg class="i"><use href="#dlin"/></svg><svg class="i"><use href="#dal"/></svg><svg class="i"><use href="#darc"/></svg><svg class="i"><use href="#dord"/></svg><span class="sp"></span>
        <svg class="i"><use href="#drad"/></svg><svg class="i"><use href="#djog"/></svg><svg class="i"><use href="#ddia"/></svg><svg class="i"><use href="#dang"/></svg><span class="sp"></span>
        <svg class="i"><use href="#dq"/></svg><svg class="i"><use href="#dbase"/></svg><svg class="i"><use href="#dcont"/></svg><svg class="i"><use href="#dsp"/></svg><svg class="i"><use href="#dbrk"/></svg><span class="sp"></span>
        <svg class="i"><use href="#tol"/></svg><svg class="i"><use href="#cen"/></svg><svg class="i"><use href="#insp"/></svg><svg class="i"><use href="#jog"/></svg><span class="sp"></span>
        <svg class="i"><use href="#dedit"/></svg><svg class="i"><use href="#dtxt"/></svg><svg class="i"><use href="#dup"/></svg><span class="sp"></span>
        <div class="combo c-100"><span class="ctext">100</span><span class="vee"></span></div>
        <svg class="i"><use href="#dst"/></svg>
      </div>
      <div class="grp g4">
        <span class="grip"></span>
        <svg class="i"><use href="#box1"/></svg><svg class="i"><use href="#box2"/></svg><svg class="i"><use href="#box3"/></svg><span class="sp"></span>
        <svg class="i"><use href="#ext"/></svg><svg class="i"><use href="#mv3"/></svg><svg class="i"><use href="#boxs"/></svg><svg class="i"><use href="#rbox"/></svg><svg class="i"><use href="#rot3"/></svg><svg class="i"><use href="#ext"/></svg><svg class="i"><use href="#box3"/></svg><svg class="i"><use href="#color3"/></svg><span class="sp"></span>
        <svg class="i"><use href="#wedge"/></svg><svg class="i"><use href="#drum"/></svg><svg class="i"><use href="#sl3"/></svg><svg class="i"><use href="#color3"/></svg><span class="sp"></span>
        <svg class="i"><use href="#addbox"/></svg><svg class="i"><use href="#sweep"/></svg><svg class="i"><use href="#split3"/></svg><svg class="i"><use href="#cube"/></svg><svg class="i"><use href="#chk3"/></svg>
      </div>
    </div>
    <div class="row r3">
      <div class="grp g5">
        <span class="grip"></span>
        <svg class="i"><use href="#e1"/></svg><svg class="i"><use href="#e2"/></svg><svg class="i"><use href="#e3"/></svg>
      </div>
    </div>
  </div>

  <div class="mid">
    <aside class="ltool">
      <div class="vbar">
        <span class="vgrip"></span>
        <svg class="i"><use href="#line"/></svg><svg class="i"><use href="#xline"/></svg><svg class="i"><use href="#pline"/></svg><svg class="i"><use href="#poly"/></svg><svg class="i"><use href="#rect"/></svg><svg class="i"><use href="#arc"/></svg><svg class="i"><use href="#circle"/></svg><svg class="i"><use href="#cloud"/></svg><svg class="i"><use href="#spl"/></svg><svg class="i"><use href="#ell"/></svg><svg class="i"><use href="#ela"/></svg><svg class="i"><use href="#insb"/></svg><svg class="i"><use href="#mkb"/></svg><svg class="i"><use href="#pts"/></svg><svg class="i"><use href="#hat"/></svg><svg class="i"><use href="#grad"/></svg><svg class="i"><use href="#reg"/></svg><svg class="i"><use href="#tbl"/></svg>
        <span class="bigA">A</span>
        <svg class="i"><use href="#gradc"/></svg>
      </div>
    </aside>

    <main class="canvas">
      <svg class="draw" viewBox="31 155 1536 1053" width="1536" height="1053">
        <!-- green boundary frames -->
        <path class="bound" d="M34 504H1563V704H34ZM34 704V904H695V504"/>

        <!-- UCS icon -->
        <path class="ucs" d="M486.500 420V466H533M482 461h9v9h-9z"/>
        <text class="ucsl" x="487" y="416">Y</text>
        <text class="ucsl" x="537" y="465">X</text>

        <text class="cjk big" x="130" y="491" textLength="48" lengthAdjust="spacingAndGlyphs">结施</text>

        <!-- sheet titles -->
        <text class="sh" x="107" y="547" textLength="64" lengthAdjust="spacingAndGlyphs">ES01</text>
        <text class="sh" x="268" y="547" textLength="69" lengthAdjust="spacingAndGlyphs">ES02</text>
        <text class="sh" x="414" y="549" textLength="69" lengthAdjust="spacingAndGlyphs">ES03</text>
        <text class="sh" x="554" y="551" textLength="69" lengthAdjust="spacingAndGlyphs">ES04</text>
        <text class="sh" x="766" y="549" textLength="69" lengthAdjust="spacingAndGlyphs">ES05</text>
        <text class="sh" x="913" y="549" textLength="69" lengthAdjust="spacingAndGlyphs">ES06</text>
        <text class="sh" x="1082" y="549" textLength="69" lengthAdjust="spacingAndGlyphs">ES07</text>
        <text class="sh" x="1239" y="549" textLength="70" lengthAdjust="spacingAndGlyphs">ES08</text>
        <text class="sh" x="1423" y="548" textLength="69" lengthAdjust="spacingAndGlyphs">ES09</text>
        <text class="sh" x="124" y="746" textLength="66" lengthAdjust="spacingAndGlyphs">ES10</text>
        <text class="sh" x="272" y="749" textLength="58" lengthAdjust="spacingAndGlyphs">ES11</text>
        <text class="sh" x="427" y="741" textLength="66" lengthAdjust="spacingAndGlyphs">ES12</text>

        <!-- labels -->
        <text class="cjk lab" x="84" y="682" textLength="101" lengthAdjust="spacingAndGlyphs">钢结构设计总说明</text>
        <text class="cjk lab" x="240" y="680" textLength="88" lengthAdjust="spacingAndGlyphs">地脚螺栓定位图</text>
        <text class="cjk lab" x="455" y="683" textLength="101" lengthAdjust="spacingAndGlyphs">刚架及支撑平面图</text>
        <text class="cjk lab" x="94" y="885" textLength="102" lengthAdjust="spacingAndGlyphs">墙面檩条布置图一</text>
        <text class="cjk lab" x="260" y="885" textLength="102" lengthAdjust="spacingAndGlyphs">墙面檩条布置图二</text>
        <text class="cjk lab" x="411" y="881" textLength="88" lengthAdjust="spacingAndGlyphs">屋面檩条布置图</text>
        <text class="gj" x="761" y="686" textLength="50" lengthAdjust="spacingAndGlyphs">GJ-1</text>
        <text class="gj" x="914" y="689" textLength="90" lengthAdjust="spacingAndGlyphs">GJ-2(2a)</text>
        <text class="gj" x="1080" y="692" textLength="89" lengthAdjust="spacingAndGlyphs">GJ-3(3a)</text>
        <text class="gj" x="1257" y="685" textLength="49" lengthAdjust="spacingAndGlyphs">GJ-4</text>
        <text class="gj" x="1413" y="687" textLength="89" lengthAdjust="spacingAndGlyphs">GJ-5(5a)</text>

        <!-- ES01 -->
        <g>
          <rect class="fo1" x="96.500" y="556.500" width="127" height="90"/><rect class="fi1" x="99" y="559" width="122" height="85"/>
          <path class="fi2" d="M139 558v87M181 558v87"/>
          <path class="gt" d="M111 563h17M105 570h27M105 572h24M105 574h28M105 576h22M105 578h25M105 580h20M105 582h19M105 596h25M105 598h22M105 600h26M105 602h24M105 604h20M105 606h25M105 608h18M105 611h10M106 613h8M107 615h6M107 617h4M105 624h12M105 626h20M105 628h26M105 630h22M105 632h25M105 634h15M144 571h28M144 573h26M144 575h22M144 577h14M144 579h10M144 584h12M144 586h20M144 588h24M144 590h16M144 592h10"/>
          <path class="mg" d="M105 570h3M105 591h3M105 608h3M105 621h3"/>
          <use href="#wd" x="146" y="604" width="14" height="14"/>
          <rect class="wf" x="145" y="619" width="14" height="5"/>
          <use href="#wd" x="186" y="559" width="14" height="13"/><use href="#wd" x="200" y="558" width="15" height="11"/><use href="#wd" x="187" y="575" width="13" height="14"/><use href="#wd" x="188" y="591" width="10" height="10"/>
        </g>
        <!-- ES02 -->
        <g>
          <rect class="fo1" x="234.500" y="556.500" width="128" height="90"/><rect class="fi1" x="237" y="559" width="123" height="85"/>
          <path class="yel" d="M225 556h10M362 556h16"/>
          <rect x="243" y="561" width="85" height="62" fill="url(#pGreen)"/>
          <rect x="249" y="565" width="55" height="52" fill="url(#pStripe)"/>
          <rect x="304" y="565" width="27" height="17" fill="url(#pRed)"/>
          <rect x="304" y="582" width="20" height="35" fill="url(#pStripe)"/>
          <rect x="324" y="586" width="13" height="31" fill="url(#pGreen)"/>
          <path class="cy" d="M304 586h20"/>
          <rect class="wf" x="291" y="629" width="9" height="2"/>
          <use href="#wd" x="340" y="563" width="18" height="18"/><use href="#wd" x="340" y="583" width="18" height="18"/><use href="#wd" x="340" y="603" width="18" height="18"/>
          <use href="#wd" x="245" y="622" width="22" height="20"/><use href="#wd" x="268" y="624" width="14" height="18"/>
        </g>
        <!-- ES03 -->
        <g>
          <rect class="fo1" x="378.500" y="556.500" width="128" height="90"/><rect class="fi1" x="381" y="559" width="123" height="85"/>
          <rect x="400" y="563" width="86" height="70" fill="url(#pStripe)"/>
          <rect x="392" y="572" width="12" height="52" fill="url(#pGreen)"/>
          <rect x="484" y="572" width="11" height="52" fill="url(#pGreen)"/>
          <rect x="399" y="573" width="86" height="50" fill="url(#pCyan)"/>
          <rect x="459" y="570" width="26" height="19" fill="url(#pRed)"/>
          <rect class="wf" x="433" y="635" width="8" height="2"/>
        </g>
        <!-- ES04 -->
        <g>
          <rect class="fo1" x="521.500" y="556.500" width="128" height="90"/><rect class="fi1" x="524" y="559" width="123" height="85"/>
          <rect x="531" y="570" width="74" height="5" fill="url(#pTable)"/><rect x="531" y="575" width="74" height="5" fill="url(#pGreen)"/>
          <rect x="608" y="570" width="37" height="5" fill="url(#pTable)"/><rect x="608" y="575" width="37" height="5" fill="url(#pGreen)"/>
          <rect x="608" y="588" width="36" height="6" fill="url(#pTable)"/><rect x="608" y="594" width="36" height="5" fill="url(#pGreen)"/>
          <rect class="wf" x="556" y="582" width="14" height="2"/><rect class="wf" x="612" y="582" width="14" height="2"/><rect class="wf" x="618" y="601" width="10" height="2"/>
          <use href="#xfr" x="528" y="597" width="30" height="26"/><use href="#xfr" x="561" y="590" width="30" height="28"/>
          <use href="#wd" x="595" y="609" width="14" height="14"/><use href="#wd" x="620" y="604" width="22" height="14"/><use href="#det" x="623" y="615" width="16" height="13"/>
          <rect x="564" y="632" width="52" height="10" fill="url(#pTableG)"/>
        </g>
        <!-- ES05 -->
        <g>
          <rect class="fo1" x="730.500" y="556.500" width="140" height="99"/><rect class="fi1" x="733" y="559" width="135" height="94"/>
          <use href="#truss" x="737" y="571" width="125" height="34"/>
          <use href="#det" x="771" y="616" width="15" height="15"/><use href="#det" x="749" y="629" width="12" height="17"/><use href="#detm" x="772" y="630" width="12" height="17"/><use href="#det" x="797" y="629" width="12" height="17"/>
          <rect x="825" y="616" width="19" height="16" fill="url(#pTable)"/>
          <rect class="wf" x="797" y="608" width="5" height="2"/><rect class="wf" x="756" y="568" width="6" height="2"/>
        </g>
        <!-- ES06 -->
        <g>
          <rect class="fo1" x="894.500" y="555.500" width="128" height="90"/><rect class="fi1" x="897" y="558" width="123" height="85"/>
          <use href="#truss" x="915" y="572" width="89" height="34"/>
          <use href="#det" x="926" y="611" width="14" height="14"/><use href="#det" x="907" y="625" width="12" height="15"/><use href="#detm" x="928" y="625" width="11" height="17"/><use href="#det" x="957" y="625" width="11" height="15"/>
          <rect x="992" y="615" width="19" height="16" fill="url(#pTable)"/>
          <rect class="gf" x="953" y="608" width="7" height="4"/><rect class="wf" x="938" y="571" width="6" height="2"/>
        </g>
        <!-- ES07 -->
        <g>
          <rect class="fo1" x="1050.500" y="556.500" width="140" height="99"/><rect class="fi1" x="1053" y="559" width="135" height="94"/>
          <use href="#truss" x="1059" y="574" width="128" height="33"/>
          <use href="#det" x="1082" y="617" width="14" height="14"/><use href="#det" x="1064" y="619" width="11" height="18"/><use href="#detm" x="1083" y="632" width="12" height="12"/><use href="#det" x="1109" y="627" width="12" height="17"/>
          <rect x="1158" y="621" width="19" height="16" fill="url(#pTableG)"/>
          <rect class="wf" x="1115" y="608" width="13" height="2"/>
        </g>
        <!-- ES08 -->
        <g>
          <rect class="fo1" x="1213.500" y="558.500" width="140" height="99"/><rect class="fi1" x="1216" y="561" width="135" height="94"/>
          <use href="#truss" x="1221" y="563" width="129" height="30"/><use href="#truss" x="1224" y="597" width="121" height="31"/>
          <use href="#det" x="1222" y="635" width="11" height="15"/><use href="#detm" x="1234" y="630" width="12" height="11"/><use href="#detm" x="1234" y="642" width="12" height="11"/><use href="#det" x="1251" y="630" width="12" height="10"/><use href="#det" x="1251" y="643" width="12" height="10"/><use href="#wd" x="1264" y="630" width="16" height="12"/><use href="#wd" x="1264" y="643" width="16" height="12"/><use href="#det" x="1280" y="630" width="14" height="10"/><use href="#det" x="1280" y="643" width="14" height="10"/>
          <rect x="1298" y="630" width="21" height="24" fill="url(#pTable)"/><rect x="1319" y="630" width="20" height="15" fill="url(#pTable)"/>
        </g>
        <!-- ES09 -->
        <g>
          <rect class="fo1" x="1392.500" y="558.500" width="127" height="90"/><rect class="fi1" x="1395" y="561" width="122" height="85"/>
          <use href="#truss" x="1399" y="564" width="80" height="31"/><use href="#truss" x="1397" y="600" width="98" height="30"/>
          <use href="#det" x="1489" y="562" width="10" height="21"/><use href="#det" x="1504" y="565" width="10" height="18"/><use href="#detm" x="1491" y="588" width="9" height="9"/><use href="#det" x="1505" y="587" width="10" height="10"/><use href="#det" x="1505" y="606" width="10" height="16"/>
          <rect x="1451" y="633" width="37" height="11" fill="url(#pTable)"/>
          <rect class="wf" x="1430" y="631" width="14" height="4"/>
        </g>
        <!-- ES10 -->
        <g>
          <rect class="fo1" x="97.500" y="753.500" width="127" height="90"/><rect class="fi1" x="100" y="756" width="122" height="85"/>
          <rect x="113" y="763" width="95" height="13" fill="url(#pGreen)"/>
          <path class="red" d="M118 763v20M130 763v20M142 763v20M154 763v20M170 763v20M190 763v20"/>
          <path class="wl" d="M113 777h95"/>
          <rect class="gf" x="150" y="778" width="25" height="4"/>
          <path class="yt" d="M110 815l22-15v20z"/><path class="gl" d="M108 815h24"/>
          <use href="#det" x="136" y="798" width="12" height="14"/><use href="#wd" x="135" y="812" width="14" height="12"/>
          <use href="#detm" x="155" y="800" width="14" height="14"/><use href="#detm" x="157" y="820" width="26" height="12"/><use href="#detm" x="170" y="800" width="12" height="18"/>
          <rect x="189" y="790" width="13" height="20" fill="url(#pTable)"/><rect x="204" y="791" width="12" height="12" fill="url(#pTable)"/><rect x="195" y="816" width="14" height="9" fill="url(#pTableG)"/>
        </g>
        <!-- ES11 -->
        <g>
          <rect class="fo1" x="235.500" y="755.500" width="133" height="94"/><rect class="fi1" x="238" y="758" width="128" height="89"/>
          <path class="wl" d="M243 768l59-3 55 3"/>
          <rect x="248" y="768" width="108" height="13" fill="url(#pYellow)"/>
          <path class="wl" d="M245 782h113"/>
          <rect x="250" y="784" width="106" height="5" fill="url(#pGreen)"/>
          <rect class="wf" x="295" y="794" width="14" height="2"/>
          <path class="wl" d="M243 807l59-3 60 3"/>
          <rect x="248" y="807" width="110" height="13" fill="url(#pYellow)"/>
          <path class="red" d="M265 806v14M280 806v14M300 806v14M320 806v14M340 806v14"/>
          <path class="wl" d="M245 821h115"/>
          <rect x="250" y="823" width="105" height="6" fill="url(#pGreen)"/>
          <rect class="wf" x="295" y="834" width="14" height="2"/>
        </g>
        <!-- ES12 -->
        <g>
          <rect class="fo1" x="396.500" y="743.500" width="133" height="94"/><rect class="fi1" x="399" y="746" width="128" height="89"/>
          <path class="gb" d="M409 749h92v76h-92z"/>
          <rect x="411" y="752" width="49" height="64" fill="url(#pWhite)"/>
          <rect x="464" y="752" width="35" height="64" fill="url(#pWhite)"/>
          <path class="yd" d="M406 817h98M406 824h98M405 755v68"/>
          <rect class="gray" x="411" y="757" width="49" height="8"/>
          <rect class="wf" x="444" y="827" width="9" height="2"/>
          <use href="#wd" x="510" y="750" width="16" height="13"/><use href="#wd" x="510" y="767" width="16" height="12"/>
          <rect x="509" y="782" width="16" height="10" fill="url(#pTableG)"/><rect x="509" y="794" width="16" height="9" fill="url(#pTableG)"/><rect x="509" y="806" width="16" height="17" fill="url(#pTable)"/>
        </g>

        <!-- crosshair -->
        <path class="cross" d="M31 1148.500H1567M1525.500 155V1208"/>
        <rect class="pick" x="1520" y="1143" width="11" height="11"/>

        <!-- view cube -->
        <g class="vc">
          <circle class="ring" cx="1488" cy="232" r="50.500"/>
          <text class="vcl" x="1488" y="187">北</text>
          <text class="vcl" x="1488" y="293">南</text>
          <text class="vcl" x="1436" y="239">西</text>
          <text class="vcl" x="1541" y="239">东</text>
          <rect class="vcs" x="1464" y="207" width="49" height="49"/>
          <rect class="vcs2" x="1473" y="216" width="30" height="30"/>
          <path class="vcp" d="M1487 220v23M1474 240.500h27M1497 228h3"/>
          <rect class="wcs" x="1466" y="313" width="45" height="16" rx="4"/>
          <text class="wcst" x="1470" y="325">WCS</text>
          <path class="wcsv" d="M1499 319h6l-3 3z"/>
        </g>
      </svg>

      <div class="cmdhist">
        <div><span>命令: '_.zoom</span></div>
        <div><span>指定窗口的角点, 输入比例因子 (nX 或 nXP), 或者</span></div>
        <div><span>[全部(A)/中心(C)/动态(D)/范围(E)/上一个(P)/比例(S)/窗口(W)/对象(O)] &lt;实时&gt;: _e</span></div>
      </div>
      <div class="cmdbar">
        <span class="vgrip2"></span>
        <svg class="i s14"><use href="#close"/></svg>
        <svg class="i s14"><use href="#wrench"/></svg>
        <div class="cmdin"><svg class="i s14"><use href="#term"/></svg><svg class="cv dk"><use href="#chev"/></svg><span class="ph">键入命令</span><span class="up"></span></div>
      </div>
    </main>

    <aside class="rtool">
      <div class="vbar r">
        <span class="vgrip"></span>
        <svg class="i"><use href="#erase"/></svg><svg class="i"><use href="#copyc"/></svg><svg class="i"><use href="#mirror"/></svg><svg class="i"><use href="#offs"/></svg><svg class="i"><use href="#arr"/></svg><svg class="i"><use href="#mv"/></svg><svg class="i"><use href="#rot"/></svg><svg class="i"><use href="#scale"/></svg><svg class="i"><use href="#stretch"/></svg><svg class="i"><use href="#trim"/></svg><svg class="i"><use href="#ext2"/></svg><svg class="i"><use href="#brk"/></svg><svg class="i"><use href="#brk2"/></svg><svg class="i"><use href="#join"/></svg><svg class="i"><use href="#cham"/></svg><svg class="i"><use href="#fil"/></svg><svg class="i"><use href="#blend"/></svg><svg class="i"><use href="#solid"/></svg>
      </div>
    </aside>
  </div>

  <div class="layouts">
    <svg class="i menuic"><use href="#menu"/></svg>
    <span class="ltab active">模型</span>
    <span class="ltab">Layout1</span><span class="slash"></span>
    <span class="ltab">Layout2</span><span class="slash"></span>
    <svg class="i plusic"><use href="#plus"/></svg><span class="slash"></span>
  </div>

  <footer class="status">
    <div class="sg sleft"></div>
    <div class="sg coords">685720.9638, -450183.7324, 0.0000</div>
    <div class="sg smodel">模型</div>
    <div class="sg s-a"><svg class="i"><use href="#grid"/></svg><svg class="i"><use href="#snap"/></svg><svg class="cv"><use href="#chev"/></svg></div>
    <div class="sg s-b"><svg class="i"><use href="#infer"/></svg><span class="on"><svg class="i"><use href="#dynin"/></svg></span><svg class="i"><use href="#ortho"/></svg><svg class="i"><use href="#polar"/></svg><svg class="cv"><use href="#chev"/></svg><svg class="i"><use href="#xsnap"/></svg><svg class="cv"><use href="#chev"/></svg><svg class="i"><use href="#angle"/></svg><span class="on"><svg class="i"><use href="#osnap"/></svg></span><svg class="cv"><use href="#chev"/></svg></div>
    <div class="sg s-c"><svg class="i"><use href="#lwt"/></svg><span class="on"><svg class="i"><use href="#transp"/></svg></span><svg class="i"><use href="#selc"/></svg><svg class="i"><use href="#d3"/></svg><svg class="cv"><use href="#chev"/></svg></div>
    <div class="sg s-d"><span class="on"><svg class="i"><use href="#axes"/></svg></span><svg class="i"><use href="#gz"/></svg><svg class="cv"><use href="#chev"/></svg><span class="on"><svg class="i"><use href="#ucs3"/></svg></span><svg class="cv"><use href="#chev"/></svg></div>
    <div class="sg s-e"><span class="on"><svg class="i"><use href="#anno"/></svg></span><svg class="i"><use href="#anno2"/></svg><svg class="i"><use href="#anno3"/></svg><span class="scale">1:1 / 100%</span><svg class="cv"><use href="#chev"/></svg></div>
    <div class="sg s-f"><svg class="i"><use href="#gear"/></svg><svg class="cv"><use href="#chev"/></svg></div>
    <div class="sg s-g"><svg class="i"><use href="#plus"/></svg></div>
    <div class="sg s-h"><svg class="i"><use href="#ruler"/></svg><span class="units">小数</span><svg class="cv"><use href="#chev"/></svg></div>
    <div class="sg s-g"><svg class="i"><use href="#clip"/></svg></div>
    <div class="sg s-i"><svg class="i"><use href="#ws"/></svg><svg class="cv"><use href="#chev"/></svg></div>
    <div class="sg s-g"><svg class="i"><use href="#iso"/></svg></div>
    <span class="on solo"><svg class="i"><use href="#gauge"/></svg></span>
    <div class="sg s-g"><svg class="i"><use href="#hw"/></svg></div>
    <div class="sg s-g"><svg class="i"><use href="#full"/></svg></div>
    <svg class="i endmenu"><use href="#menu"/></svg>
  </footer>
</div>

<div class="wm">
  <span class="w w1">知末网www.znzmo.com</span><span class="w w2">知末网www.znzmo.com</span><span class="w w3">知末网www.znzmo.com</span>
  <span class="w w4">知末网www.znzmo.com</span><span class="w w5">知末网www.znzmo.com</span><span class="w w6">知末网www.znzmo.com</span><span class="w w7">知末网www.znzmo.com</span>
  <span class="w w8">知末网www.znzmo.com</span><span class="w w9">知末网www.znzmo.com</span><span class="w w10">知末网www.znzmo.com</span>
</div>
<div class="zm">知末</div>
<div class="idtag">ID: 1180229878</div>
</div>
</body>
</html>
```
FILE: styles.css
```css
*{box-sizing:border-box}
html,body{margin:0;padding:0;background:#0a8fd0}
body{font-family:"Noto Sans","Noto Sans CJK SC",sans-serif;font-size:12px;color:#cdd1d6}
.defs{position:absolute;width:0;height:0;overflow:hidden}
.page{position:relative;width:1600px;height:1268px;padding:1px 2px 4px;background:#0a8fd0;overflow:hidden}
.win{width:1596px;height:1263px;display:flex;flex-direction:column;background:#222933}

/* icon paint */
.F{fill:#dcdfe2}.G{fill:#a4a8ad}.G2{fill:#6d747f}.D{fill:#3b4453}.B{fill:#5ba8df}.O{fill:#f5a623}.R{fill:#e0434e}.N{fill:#3cc86a}.Y{fill:#f2d35c}.Rd{fill:#a8262e}.Br{fill:#c9a26a}.Gd{fill:#5a9fd4}.Rp{fill:#ef8f8f}.Fr{fill:#f4d9a0}.Fw{fill:#fff}.Dk{fill:#222}.Lt{fill:#c8c8c8}
.l,.b,.lw,.lb,.lk,.lo,.lo2,.ld,.ln,.gc,.lr,.lr2,.ldash,.ldot,.ldb{fill:none;stroke-width:1.300}
.l{stroke:#d5d8db}.b{stroke:#5ab4f0}.lw{stroke:#fff;stroke-width:1.400}.lb{stroke:#eef0f2;stroke-width:2}.lk{stroke:#333;stroke-width:1.200}
.lo{stroke:#f5a623}.lo2{stroke:#f5a623;stroke-width:1.800}.ld{stroke:#c8ccd0;stroke-dasharray:2 1}.ln{stroke:#3b4453;stroke-width:2}
.gc{stroke:#4fd070;stroke-width:1.500}.lr{stroke:#e04040}.lr2{stroke:#e04040;stroke-width:1.600}.ldash{stroke:#d5d8db;stroke-dasharray:3 2}.ldot{stroke:#d5d8db;stroke-width:2;stroke-dasharray:2 4}.ldb{stroke:#fff;stroke-dasharray:3 1.500}

.i{width:18px;height:18px;flex:none;margin:0 1.750px;display:block}
.i.sm{width:16px;margin:0 0 0 1px}
.i.s14{width:14px;height:14px}
.cv{width:8px;height:8px;flex:none;display:block;margin:0 2px}

/* title bar */
.titlebar{height:29px;display:flex;align-items:center;padding-left:12px;flex:none}
.logo{width:22px;height:21px;flex:none;background:linear-gradient(#ed2f55,#c51538);color:#fff;font:bold 15px "Liberation Sans",sans-serif;text-align:center;line-height:20px;box-shadow:0 1px 0 #7b0a22}
.ml2{margin-left:3px}
.qa{display:flex;align-items:center;margin-left:5px;width:288px;flex:none}
.qa .i{margin:0 2px}
.q{margin-left:-1px}
.dim{opacity:.75}
.share{margin-left:0;font-size:12px;color:#5fb7ee;white-space:nowrap}
.apptitle{display:flex;gap:14px;margin-left:172px;width:485px;flex:none;font-size:12px;color:#d6d9dd;white-space:nowrap}
.fname{font-size:11.500px}
.tbright{display:flex;align-items:center;flex:none}
.tri{width:0;height:0;border-left:4px solid #ccd;border-top:4px solid transparent;border-bottom:4px solid transparent;margin-right:6px}
.searchbox{width:167px;height:19px;background:#3f4858;color:#9ea5ae;font-style:italic;font-size:11px;line-height:18px;padding-left:3px;margin-right:3px;white-space:nowrap}
.login{font-size:12px;color:#dde0e3;margin-left:1px;white-space:nowrap;flex:none}
.ml-login{margin-left:53px;margin-right:7px}
.tsep{width:1px;height:24px;background:#4a5260;margin:0 4px}
.wbtn.first{margin-left:67px}
.wbtn{margin:0 13px}
.wbtn:last-child{margin-right:0}

/* menu bar */
.menubar{height:19px;display:flex;align-items:center;gap:22.800px;padding-left:14px;flex:none;position:relative;font-size:11.500px;color:#c3c7cc;white-space:nowrap}
.mwin{margin-left:auto;display:flex;margin-right:1px}
.mwin .i{width:14px;height:14px;margin:0 8.500px}

/* tab bar */
.tabbar{height:25px;display:flex;align-items:center;flex:none;border-top:1px solid #353c48;background:#1f2630;font-size:12px;padding-left:15px}
.menuic{margin:0}
.slash{width:1px;height:20px;background:#4a5260;transform:skewX(-25deg);margin:0 9px}
.slash.s1{margin:0 13px 0 9px}
.tabbar .tab{padding:0 6px 0 0;color:#d6d9dd}
.tabbar .tab.active{background:#3b4453;height:24px;line-height:24px;width:182px;padding-left:16px;clip-path:polygon(9px 0,100% 0,100% 100%,0 100%);display:flex;align-items:center;font-weight:700;font-size:11.500px;color:#e6e8eb;margin-left:-3px;white-space:nowrap}
.tabx{width:13px;height:13px;margin-left:5px;opacity:.7}
.plusic{margin-left:10px}

/* tool rows */
.tools{height:81px;flex:none;background:#3b4453;padding:4px 0 0 3px;display:flex;flex-direction:column;gap:4px}
.row{display:flex;align-items:center;height:21px}
.grp{height:22px;display:flex;align-items:center;border:1px solid #2c333f;background:#3b4453}
.grip{width:3px;height:17px;margin:0 2px 0 1px;flex:none;background:repeating-linear-gradient(#b8bcc2 0 1px,transparent 1px 3px)}
.grip.alone{margin:0 1px 0 3px}
.sp{width:1px;height:18px;background:#262c37;margin:0 2.400px;flex:none}
.g1{width:603px}
.g2{width:378px;margin-left:2px;padding-left:0}
.combo{height:20px;background:#fff;display:flex;align-items:center;position:relative;color:#111;font-size:11.500px;flex:none;margin-right:4px}
.layer{width:281px;padding-left:2px;margin:0 1px 0 1px}
.layer .i{margin:0 .5px}
.swatch{width:12px;height:14px;background:#00ff00;border:1px solid #777;margin:0 5px 0 2px;flex:none}
.ctext{white-space:nowrap}
.vee{position:absolute;right:4px;top:6px;width:6px;height:6px;border-right:1px solid #666;border-bottom:1px solid #666;transform:rotate(45deg)}
.vee.off{border-color:#aaa}
.off{color:#8c8c8c}
.c-color{width:142px;padding-left:3px}
.c-lt{width:151px;padding-left:5px}
.ln1{width:57px;height:1px;background:#000;margin-right:5px}
.c-lw{width:118px;padding-left:6px}
.ln2{width:33px;height:1px;background:#000;margin-right:5px}
.c-by{width:113px;background:#eceded;padding-left:10px}
.g3{width:602px}
.c-100{width:113px;padding-left:18px;margin:0;height:21px}
.g4{width:456px;margin-left:1px}
.g5{width:73px}
.cw{margin:0 1px;width:9px}

/* middle */
.mid{height:1053px;display:flex;flex:none}
.ltool{width:29px;flex:none;background:#3b4453;padding:0 3px 0 2px}
.rtool{width:31px;flex:none;background:#3b4453;padding:0 5px 0 2px}
.vbar{display:flex;flex-direction:column;align-items:center;border:1px solid #2c333f;border-top:0;height:425px;width:22px;padding-top:0}
.vbar.r{height:378px;width:23px}
.vbar .i{margin:1.300px 0;width:18px;height:18px}
.vgrip{width:14px;height:9px;margin:0 0 -1px;flex:none;background:repeating-linear-gradient(90deg,#a8acb2 0 1px,transparent 1px 2px) center/100% 3px no-repeat}
.bigA{font:19px/20.600px "Liberation Sans",sans-serif;color:#e4e6e8;height:20.600px}
.canvas{width:1536px;height:1053px;background:#000;position:relative;flex:none;overflow:hidden}
.draw{display:block}

/* drawing */
.bound{fill:none;stroke:#00a400;stroke-width:1.500}
.ucs{fill:none;stroke:#c8c8c8;stroke-width:1}
.ucsl{font:300 17px Roboto,sans-serif;fill:#c8c8c8;text-anchor:start}
.cjk{font-family:"Noto Sans CJK SC",sans-serif;fill:#dcdcdc}
.big{font-size:34px;font-weight:300}
.lab{font-size:16.500px;font-weight:500}
.sh{font-family:Roboto,sans-serif;font-weight:100;font-size:41px;fill:#f0f0f0}
.gj{font-family:Roboto,sans-serif;font-weight:100;font-size:28px;fill:#f0f0f0;stroke:#e0e0e0;stroke-width:.25}
.fo1{fill:none;stroke:#9a9a9a;stroke-width:1}
.fi1{fill:none;stroke:#e4e4e4;stroke-width:2}
.fi2{fill:none;stroke:#d4d4d4;stroke-width:1}
.gt{fill:none;stroke:#00f000;stroke-width:2}
.mg{fill:none;stroke:#ff20ff;stroke-width:1.500}
.wf{fill:#e8e8e8}
.gf{fill:#00c000}
.gray{fill:#cfcfcf;opacity:.55}
.yel{stroke:#b8b800;stroke-width:1.500;fill:none}
.cy{stroke:#20e0e0;stroke-width:2;fill:none}
.red{stroke:#d02020;stroke-width:1;fill:none}
.wl{stroke:#e0e0e0;stroke-width:1;fill:none}
.yt{fill:none;stroke:#f0f040;stroke-width:2}
.gl{stroke:#00c000;stroke-width:2;fill:none}
.gb{fill:none;stroke:#00b000;stroke-width:4}
.yd{fill:none;stroke:#e8e800;stroke-width:2;stroke-dasharray:2 5}
.cross{fill:none;stroke:#e0e0e0;stroke-width:1}
.pick{fill:none;stroke:#d8d8d8;stroke-width:1}
.ring{fill:none;stroke:#2a2a2a;stroke-width:12}
.vcl{font:20px "Noto Sans CJK SC",sans-serif;fill:#8c8c8c;text-anchor:middle}
.vcs{fill:#999}
.vcs2{fill:#8e8f92}
.vcp{fill:none;stroke:#4a4c50;stroke-width:1.500}
.wcs{fill:#6e6e76;stroke:#55555c}
.wcst{font:11px "Liberation Sans",sans-serif;fill:#3e3e44}
.wcsv{fill:#8a8a90}

/* command */
.cmdhist{position:absolute;left:387px;top:972px;font:11px/19px "Liberation Mono","Noto Sans CJK SC",monospace;color:#b8b8b8;letter-spacing:.3px}
.cmdhist div{height:19px}
.cmdhist span{background:#454545;padding:1px 3px;border-radius:2px;white-space:nowrap}
.cmdbar{position:absolute;left:327px;top:1028px;width:881px;height:24px;background:#222933;display:flex;align-items:center;border-radius:3px 0 0 3px}
.vgrip2{width:3px;height:16px;margin:0 4px 0 4px;background:repeating-linear-gradient(#b8bcc2 0 1px,transparent 1px 3px)}
.cmdbar .i.s14{margin:0 3px}
.cmdin{flex:1;height:23px;background:#b2b2b2;margin-left:3px;display:flex;align-items:center;padding-left:4px;position:relative;border-top:1px solid #8d8d8d}
.cv.dk{filter:brightness(.3);margin:0}
.ph{font-style:italic;color:#5e5e5e;font-size:11.500px;margin-left:3px}
.up{position:absolute;right:5px;top:9px;width:0;height:0;border-left:3px solid transparent;border-right:3px solid transparent;border-bottom:5px solid #444}

/* layouts */
.layouts{height:32px;flex:none;display:flex;align-items:flex-start;padding:2px 0 0 15px;font-size:11.500px;line-height:25px;color:#d6d9dd;background:#222933}
.layouts .i{margin-top:3px}
.ltab{padding:0 7px;white-space:nowrap}
.ltab.active{background:#3b4453;height:25px;width:54px;padding-left:15px;margin:0 0 0 7px;clip-path:polygon(9px 0,100% 0,calc(100% - 9px) 100%,0 100%);font-weight:700;font-size:12px;color:#eee}
.layouts .slash{margin:2px 3px 0 3px}
.layouts .plusic{margin:4px 4px 0 6px;width:16px;height:16px}

/* status */
.status{height:24px;flex:none;display:flex;align-items:center;background:#222933;padding:0 0 2px 4px;gap:4px;font-size:12px;color:#dfe2e5}
.sg{height:22px;background:#3b4453;display:flex;align-items:center;flex:none}
.sg .i{margin:0 1.500px}
.sg .cv{margin:0 4px}
.sleft{width:386px}
.coords{width:197px;justify-content:center;white-space:nowrap;font-size:12px;letter-spacing:-.4px;padding-left:4px}
.smodel{width:28px;justify-content:center;margin-left:-1px}
.s-a{width:57px;padding-left:1px}
.s-b{width:206px;padding-left:3px}
.s-c{width:105px;padding-left:0;gap:2px}
.s-c .cv{margin:0 2px}
.s-d{width:95px;padding-left:0;gap:1px}
.s-d .cv{margin:0 3px}
.s-e{width:135px;gap:1.500px}
.s-e .cv{margin:0 1px}
.s-f{width:34px;padding-left:1px}
.s-f .cv{margin:0 2px}
.s-g{width:23px;justify-content:center}
.s-h{width:90px;padding-left:2px}
.s-i{width:36px;margin-left:-2px}
.s-i .cv{margin:0 2px}
.on{background:#5d9acd;width:21px;height:22px;display:flex;align-items:center;justify-content:center;flex:none}
.sg .on .i,.on .i{margin:0}
.solo{border-radius:3px;margin:0 5px 0 -6px}
.scale{font-size:12px;white-space:nowrap;letter-spacing:-.3px;margin-left:2px}
.units{font-size:12px;width:48px;padding-left:5px}
.endmenu{margin-left:2px}

/* overlays */
.wm{position:absolute;left:0;top:0;width:1600px;height:1268px;pointer-events:none;overflow:hidden}
.w{position:absolute;font:400 35px/1 "Liberation Sans","Noto Sans CJK SC",sans-serif;color:rgba(255,255,255,.03);-webkit-text-stroke:2.500px rgba(255,255,255,.115);white-space:nowrap;transform:rotate(-45deg);transform-origin:0 100%}
.w1{left:28px;top:355px}
.w2{left:579px;top:355px}
.w3{left:1130px;top:355px}
.w4{left:-115px;top:722px}
.w5{left:436px;top:722px}
.w6{left:987px;top:722px}
.w7{left:1538px;top:722px}
.w8{left:273px;top:1089px}
.w9{left:824px;top:1089px}
.w10{left:1375px;top:1089px}
.zm{position:absolute;left:1407px;top:1122px;font:500 60px/1.4 "Noto Sans CJK SC",sans-serif;color:#d2d2d2;letter-spacing:2px;white-space:nowrap;pointer-events:none}
.idtag{position:absolute;left:1361px;top:1211px;font:700 32px/36px "Liberation Sans",sans-serif;color:#fff;white-space:nowrap}
```
